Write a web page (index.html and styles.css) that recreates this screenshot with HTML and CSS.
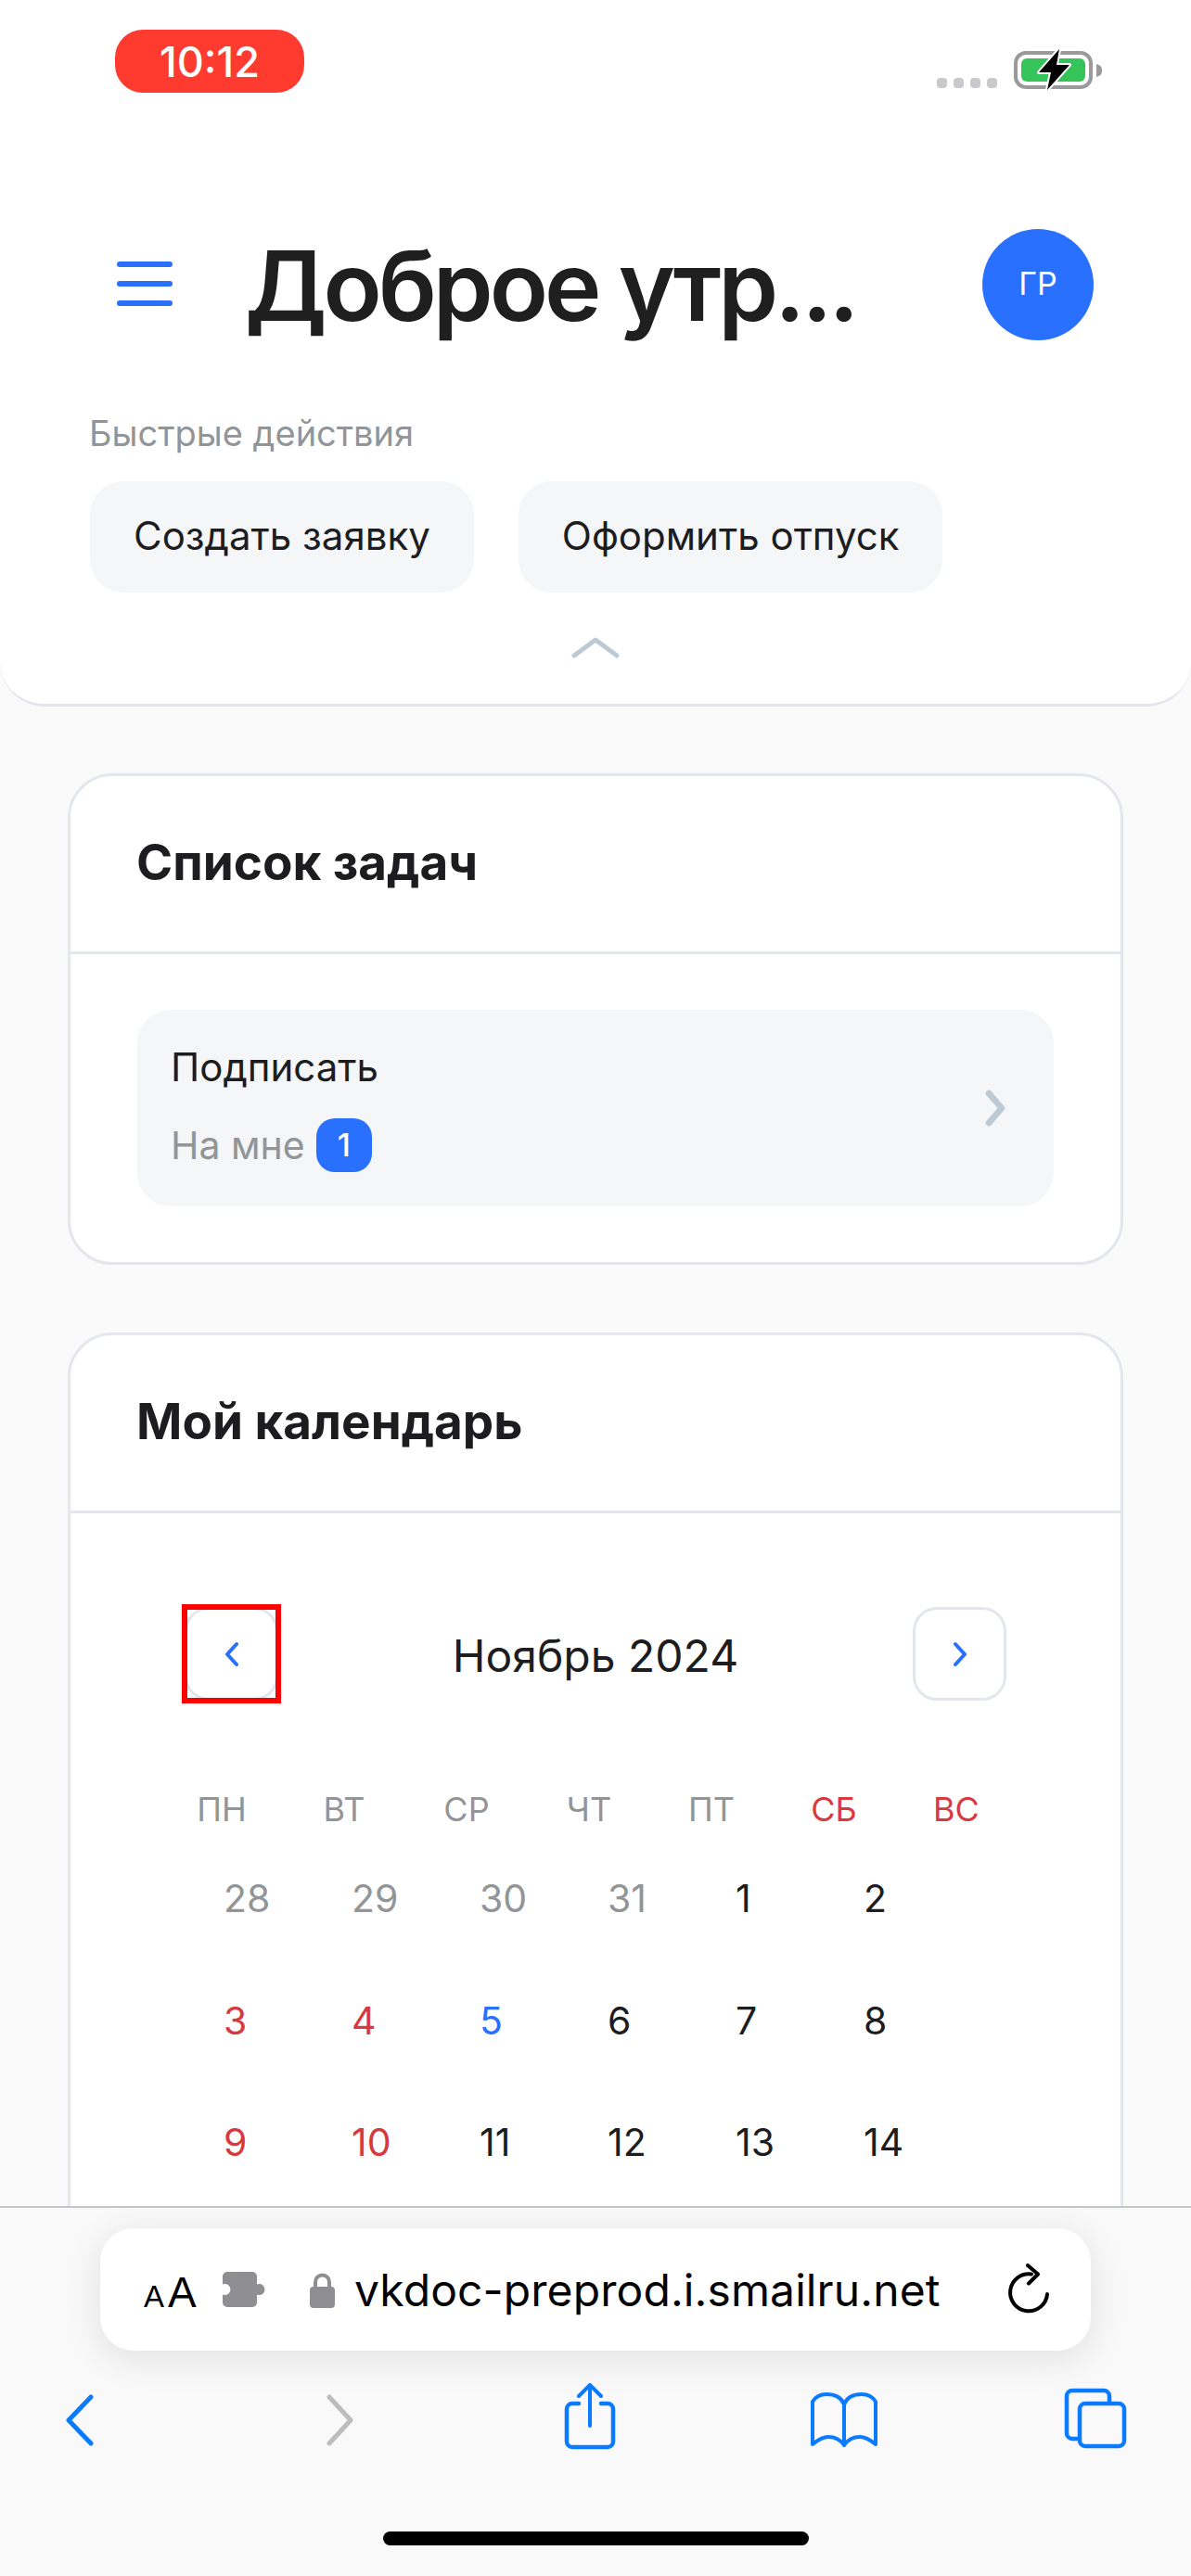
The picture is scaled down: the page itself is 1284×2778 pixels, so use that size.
FILE: index.html
```html
<!DOCTYPE html>
<html lang="ru">
<head>
<meta charset="utf-8">
<title>Главная</title>
<link rel="stylesheet" href="styles.css">
</head>
<body>
<div class="shell">
  <header class="top">
    <div class="status">
      <div class="time">10:12</div>
      <div class="status-right">
        <div class="signal"><i></i><i></i><i></i><i></i></div>
        <svg class="battery" width="98" height="46" viewBox="0 0 98 46">
          <rect x="2" y="5" width="81" height="37" rx="11" fill="none" stroke="#9a9a9c" stroke-width="4"/>
          <rect x="8" y="11" width="69" height="25" rx="6" fill="#34c45a"/>
          <path d="M89 17c4 1 6 3 6 7s-2 6-6 7z" fill="#9a9a9c"/>
          <path d="M49 1 27 26h13l-4 19 24-27H46z" fill="#000" stroke="#fff" stroke-width="4" stroke-linejoin="round" paint-order="stroke"/>
        </svg>
      </div>
    </div>
    <div class="title-row">
      <div class="burger"><i></i><i></i><i></i></div>
      <h1 class="title">Доброе утр...</h1>
      <div class="avatar">ГР</div>
    </div>
    <div class="quick-label">Быстрые действия</div>
    <div class="quick-row">
      <div class="quick-btn">Создать заявку</div>
      <div class="quick-btn">Оформить отпуск</div>
    </div>
    <svg class="collapse" width="52" height="24" viewBox="0 0 52 24"><path d="M3 21 26 4l23 17" fill="none" stroke="#bccad6" stroke-width="5" stroke-linecap="round" stroke-linejoin="round"/></svg>
  </header>

  <main class="content">
    <section class="card">
      <h2 class="card-head">Список задач</h2>
      <div class="tasks">
        <div class="task">
          <div class="task-text">
            <div class="task-name">Подписать</div>
            <div class="task-sub"><span>На мне</span><b class="badge">1</b></div>
          </div>
          <svg class="task-arrow" width="22" height="40" viewBox="0 0 22 40"><path d="M4 4l14 16L4 36" fill="none" stroke="#bccad6" stroke-width="6.500" stroke-linecap="round" stroke-linejoin="round"/></svg>
        </div>
      </div>
    </section>

    <section class="card">
      <h2 class="card-head">Мой календарь</h2>
      <div class="calendar">
        <div class="cal-nav">
          <div class="cal-btn marked">
            <svg width="18" height="28" viewBox="0 0 18 28"><path d="M14 3 4 14l10 11" fill="none" stroke="#2970ff" stroke-width="4" stroke-linecap="round" stroke-linejoin="round"/></svg>
          </div>
          <div class="cal-title">Ноябрь 2024</div>
          <div class="cal-btn">
            <svg width="18" height="28" viewBox="0 0 18 28"><path d="m4 3 10 11L4 25" fill="none" stroke="#2970ff" stroke-width="4" stroke-linecap="round" stroke-linejoin="round"/></svg>
          </div>
        </div>
        <div class="weekdays">
          <span>ПН</span><span>ВТ</span><span>СР</span><span>ЧТ</span><span>ПТ</span><span class="red">СБ</span><span class="red">ВС</span>
        </div>
        <div class="days">
          <span class="muted">28</span><span class="muted">29</span><span class="muted">30</span><span class="muted">31</span><span>1</span><span>2</span>
          <span class="red">3</span><span class="red">4</span><span class="blue">5</span><span>6</span><span>7</span><span>8</span>
          <span class="red">9</span><span class="red">10</span><span>11</span><span>12</span><span>13</span><span>14</span>
        </div>
      </div>
    </section>
  </main>

  <footer class="browser">
    <div class="urlbar">
      <div class="aa"><span class="aa-s">A</span><span class="aa-l">A</span></div>
      <svg class="puzzle" width="47" height="38" viewBox="0 0 47 38"><path d="M5 0h27a5 5 0 0 1 5 5v8.600a6 6 0 1 1 0 11V33a5 5 0 0 1-5 5H5a5 5 0 0 1-5-5v-8.500a6 6 0 1 0 0-11V5a5 5 0 0 1 5-5z" fill="#8e8e93"/></svg>
      <svg class="lock" width="27" height="39" viewBox="0 0 27 39"><path d="M6 18v-7a7.500 7.500 0 0 1 15 0v7" fill="none" stroke="#8e8e93" stroke-width="4"/><rect y="16" width="27" height="23" rx="4" fill="#8e8e93"/></svg>
      <div class="url">vkdoc-preprod.i.smailru.net</div>
      <svg class="reload" width="46" height="56" viewBox="0 0 46 56"><path d="M26 11.500A20 20 0 1 0 43 33" fill="none" stroke="#000" stroke-width="4" stroke-linecap="round"/><path d="M22 2l11 9.500-10 10" fill="none" stroke="#000" stroke-width="4" stroke-linecap="round" stroke-linejoin="round"/></svg>
    </div>
    <div class="tools">
      <svg class="t-back" width="32" height="56" viewBox="0 0 32 56"><path d="M28 3 4 28l24 25" fill="none" stroke="#0a7aff" stroke-width="5" stroke-linecap="round" stroke-linejoin="round"/></svg>
      <svg class="t-fwd" width="32" height="56" viewBox="0 0 32 56"><path d="m4 3 23 25L4 53" fill="none" stroke="#bdbdbd" stroke-width="5" stroke-linecap="round" stroke-linejoin="round"/></svg>
      <svg class="t-share" width="56" height="72" viewBox="0 0 56 72"><path d="M16 22H9a6 6 0 0 0-6 6v35a6 6 0 0 0 6 6h38a6 6 0 0 0 6-6V28a6 6 0 0 0-6-6h-7" fill="none" stroke="#0a7aff" stroke-width="4.500" stroke-linecap="round"/><path d="M28 46V3M16 14 28 2l12 12" fill="none" stroke="#0a7aff" stroke-width="4" stroke-linecap="round" stroke-linejoin="round"/></svg>
      <svg class="t-book" width="72" height="60" viewBox="0 0 72 60"><path d="M36 14C33 6 26 3 17 3 10 3 5 6 2 11v46c6-5 11-8 17-8 8 0 13 3 17 9 4-6 9-9 17-9 6 0 11 3 17 8V11C67 6 62 3 55 3c-9 0-16 3-19 11v44" fill="none" stroke="#0a7aff" stroke-width="4" stroke-linejoin="round" stroke-linecap="round"/></svg>
      <svg class="t-tabs" width="68" height="66" viewBox="0 0 68 66"><path d="M49 17V9a6 6 0 0 0-6-6H9a6 6 0 0 0-6 6v40a6 6 0 0 0 6 6h7" fill="none" stroke="#0a7aff" stroke-width="4.500"/><rect x="17" y="17" width="48" height="46" rx="6" fill="none" stroke="#0a7aff" stroke-width="4.500"/></svg>
    </div>
    <div class="home"></div>
  </footer>
</div>
</body>
</html>
```

FILE: styles.css
```css
* { box-sizing: border-box; }
html, body { margin: 0; padding: 0; }
body { font-family: Inter, "Noto Sans", sans-serif; color: #1d1d1f; background: #fafafb; }

.shell { width: 1284px; height: 2778px; display: flex; flex-direction: column; overflow: hidden; }

/* header */
.top {
  height: 762px; flex: none; background: #fff;
  border-bottom: 3px solid #e3e6ec;
  border-radius: 0 0 48px 48px;
  display: flex; flex-direction: column;
}
.status { height: 68px; margin-top: 32px; padding: 0 93px 0 124px; display: flex; justify-content: space-between; align-items: flex-start; flex: none; }
.time {
  width: 204px; height: 68px; border-radius: 30px; background: #ff3b30; color: #fff;
  font-size: 45px; font-weight: 500; display: flex; align-items: center; justify-content: center;
}
.status-right { display: flex; align-items: flex-end; gap: 18px; margin-top: 20px; }
.signal { display: flex; gap: 7px; margin-bottom: 3px; }
.signal i { width: 11px; height: 11px; border-radius: 4px; background: #c9c9cb; }
.battery { display: block; }

.title-row { margin-top: 147px; height: 120px; padding: 0 105px 0 126px; display: flex; align-items: center; flex: none; }
.burger { width: 60px; height: 48px; display: flex; flex-direction: column; justify-content: space-between; margin-right: 78px; margin-top: -2px; }
.burger i { height: 6px; border-radius: 3px; background: #2970ff; }
.title { margin: 0; padding-top: 1px; flex: 1; font-size: 104px; font-weight: 600; line-height: 120px; letter-spacing: -4px; color: #1f1f1f; white-space: nowrap; }
.avatar {
  width: 120px; height: 120px; border-radius: 50%; background: #2970ff; color: #fff;
  font-size: 34px; padding-bottom: 4px; display: flex; align-items: center; justify-content: center; flex: none;
}

.quick-label { margin: 78px 0 0 96px; font-size: 38px; line-height: 44px; color: #929598; flex: none; }
.quick-row { display: flex; gap: 48px; margin: 30px 0 0 97px; flex: none; }
.quick-btn {
  height: 120px; padding: 0 47px 4px; border-radius: 36px; background: #f4f6f8;
  font-size: 42px; display: flex; align-items: center; color: #1d1d1f;
}
.collapse { display: block; margin: 47px auto 0; flex: none; }

/* content */
.content { flex: 1; min-height: 0; overflow: hidden; padding: 72px 73px 0; display: flex; flex-direction: column; gap: 73px; }
.card { background: #fff; border: 3px solid #e3e6ec; border-radius: 48px; flex: none; }
.card-head {
  margin: 0; height: 192px; padding: 0 0 3px 71px; display: flex; align-items: center;
  font-size: 53px; font-weight: 700; color: #1d1d1f; border-bottom: 3px solid #e3e6ec;
}
.tasks { padding: 60px 72px 60px; }
.task {
  height: 212px; background: #f4f6f8; border-radius: 36px; padding: 0 52px 0 36px;
  display: flex; align-items: center; justify-content: space-between;
}
.task-text { display: flex; flex-direction: column; gap: 30px; }
.task-name { font-size: 42px; line-height: 50px; }
.task-sub { display: flex; align-items: center; gap: 12px; font-size: 41px; line-height: 58px; color: #929598; }
.badge {
  width: 60px; height: 58px; border-radius: 20px; background: #2970ff; color: #fff;
  font-size: 34px; font-weight: 500; display: flex; align-items: center; justify-content: center;
}

/* calendar */
.calendar { padding-top: 101px; height: 900px; }
.cal-nav { display: flex; align-items: center; justify-content: space-between; padding: 0 123px; }
.cal-btn {
  width: 101px; height: 101px; border: 3px solid #e3e6ec; border-radius: 26px; background: #fff;
  display: flex; align-items: center; justify-content: center; position: relative;
}
.cal-btn.marked::after { content: ""; position: absolute; inset: -6px; border: 6px solid #f00; }
.cal-title { font-size: 48px; line-height: 60px; padding-top: 4px; color: #1d1d1f; }
.weekdays { display: grid; grid-template-columns: repeat(7, 132px); margin: 95px 0 0 97px; font-size: 36px; line-height: 44px; color: #929598; text-align: center; }
.days { display: grid; grid-template-columns: repeat(6, 138px); grid-auto-rows: 131.500px; margin: 0 0 0 165px; padding-top: 9px; font-size: 41px; line-height: 131.500px; color: #1d1d1f; }
.red { color: #d8393f; }
.muted { color: #929598; }
.blue { color: #2970ff; }

/* browser bar */
.browser { height: 399px; flex: none; background: #f9f9f9; border-top: 2px solid #c6c6c8; display: flex; flex-direction: column; }
.urlbar {
  height: 132px; margin: 22px 108px 0; padding: 0 44px 0 47px; background: #fff; border-radius: 36px;
  box-shadow: 0 8px 40px rgba(0,0,0,.10);
  display: flex; align-items: center; flex: none;
}
.aa { width: 58px; display: flex; align-items: baseline; gap: 4px; line-height: 1; color: #000; font-family: "Liberation Sans", sans-serif; margin-top: 6px; }
.aa-s { font-size: 33px; }
.aa-l { font-size: 46px; }
.puzzle { margin-left: 27px; flex: none; }
.lock { margin-left: 47px; flex: none; }
.url { margin-left: 21px; flex: 1; font-size: 48px; letter-spacing: .1px; color: #000; white-space: nowrap; }
.reload { flex: none; }
.tools { display: flex; align-items: flex-start; height: 112px; margin-top: 35px; }
.t-back { margin: 12px 0 0 70px; }
.t-fwd { margin: 12px 0 0 249px; }
.t-share { margin: 0 0 0 225px; }
.t-book { margin: 9px 0 0 210px; }
.t-tabs { margin: 5px 0 0 201px; }
.home { width: 459px; height: 15px; border-radius: 8px; background: #000; margin: 48px auto 0; flex: none; }
```
